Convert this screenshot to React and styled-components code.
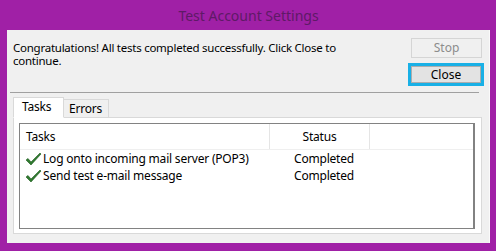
import styled, { createGlobalStyle } from "styled-components";

const GlobalStyle = createGlobalStyle`
  html, body {
    margin: 0;
    padding: 0;
    background: #a020a6;
  }
  body {
    font-family: "Noto Sans", "Open Sans", sans-serif;
    font-size: 12px;
    letter-spacing: -0.2px;
    color: #000;
  }
`;

const tasks = [
  { name: "Log onto incoming mail server (POP3)", status: "Completed" },
  { name: "Send test e-mail message", status: "Completed" },
];

function Check() {
  return (
    <svg width="17" height="14" viewBox="0 0 17 14">
      <path
        d="M1 8 L3 6.5 L6 10 L15 1 L16 2 L6 13 Z"
        fill="#2f7a2f"
        stroke="#1f5a1f"
        strokeWidth="0.6"
        strokeLinejoin="round"
      />
    </svg>
  );
}

export default function App() {
  return (
    <>
      <GlobalStyle />
      <Window>
        <TitleBar>Test Account Settings</TitleBar>
        <Content>
          <TopRow>
            <Message>
              <Line>
                Congratulations! All tests completed successfully. Click Close
                to
              </Line>
              <Line>continue.</Line>
            </Message>
            <Buttons>
              <Button disabled>Stop</Button>
              <FocusRing>
                <Button $focused>Close</Button>
              </FocusRing>
            </Buttons>
          </TopRow>
          <Separator />
          <TabStrip>
            <Tab $active>Tasks</Tab>
            <Tab>Errors</Tab>
          </TabStrip>
          <Panel>
            <List>
              <HeaderRow>
                <HeaderCell>Tasks</HeaderCell>
                <HeaderCell $center>Status</HeaderCell>
                <HeaderCell $last />
              </HeaderRow>
              {tasks.map((t) => (
                <Row key={t.name}>
                  <NameCell>
                    <Check />
                    {t.name}
                  </NameCell>
                  <StatusCell>{t.status}</StatusCell>
                </Row>
              ))}
            </List>
          </Panel>
        </Content>
      </Window>
    </>
  );
}

const Window = styled.div`
  width: 496px;
  height: 251px;
  display: flex;
  flex-direction: column;
  box-sizing: border-box;
  padding: 0 6px 8px 7px;
`;

const TitleBar = styled.div`
  height: 30px;
  display: flex;
  align-items: center;
  justify-content: center;
  font-size: 14px;
  letter-spacing: 0;
  color: #5e1a66;
`;

const Content = styled.div`
  flex: 1;
  background: #f0f0f0;
  border-right: 1px solid #fafafa;
  display: flex;
  flex-direction: column;
  padding: 0 6px 9px 6px;
`;

const TopRow = styled.div`
  display: flex;
  justify-content: space-between;
  height: 62px;
`;

const Message = styled.div`
  padding-top: 10px;
  font-size: 11.5px;
  letter-spacing: -0.25px;
`;

const Line = styled.div`
  height: 13px;
  line-height: 15px;
  white-space: nowrap;
`;

const Buttons = styled.div`
  display: flex;
  flex-direction: column;
  align-items: flex-end;
  padding-top: 8px;
  gap: 5px;
  margin-right: 1px;
`;

const Button = styled.button`
  width: ${(p) => (p.$focused ? "70px" : "71px")};
  height: ${(p) => (p.$focused ? "17px" : "20px")};
  box-sizing: border-box;
  border: 1px solid ${(p) => (p.disabled ? "#d5d5d5" : "#adadad")};
  background: ${(p) => (p.disabled ? "#f0f0f0" : "#e3e3e3")};
  color: ${(p) => (p.disabled ? "#8c8c8c" : "#000")};
  font-family: inherit;
  font-size: 12px;
  letter-spacing: 0;
  line-height: 1;
  padding: 0;
  margin: 0;
`;

const FocusRing = styled.div`
  border: 3px solid #19b0e6;
  display: flex;
  margin-right: -2px;
`;

const Separator = styled.div`
  height: 1px;
  background: #a0a0a0;
  margin: 0 4px 0 -3px;
`;

const TabStrip = styled.div`
  display: flex;
  align-items: flex-end;
  height: 25px;
  margin-bottom: -1px;
  position: relative;
  z-index: 1;
`;

const Tab = styled.div`
  box-sizing: border-box;
  height: ${(p) => (p.$active ? "21px" : "19px")};
  padding: 0 ${(p) => (p.$active ? "8px" : "5px")};
  width: ${(p) => (p.$active ? "51px" : "45px")};
  border: 1px solid #d9d9d9;
  border-bottom: ${(p) => (p.$active ? "1px solid #fff" : "1px solid #d9d9d9")};
  border-left: ${(p) => (p.$active ? "1px solid #d9d9d9" : "none")};
  background: ${(p) => (p.$active ? "#fff" : "#f0f0f0")};
  display: flex;
  align-items: center;
  font-size: 12px;
  padding-bottom: ${(p) => (p.$active ? "3px" : "0")};
`;

const Panel = styled.div`
  flex: 1;
  background: #fff;
  border: 1px solid #d9d9d9;
  padding: 5px 6px 4px 5px;
  margin-right: 1px;
  display: flex;
`;

const List = styled.div`
  flex: 1;
  border: 1px solid #828282;
  border-right-width: 2px;
  background: #fff;
`;

const HeaderRow = styled.div`
  display: grid;
  grid-template-columns: 250px 100px 1fr;
  height: 25px;
  border-bottom: 1px solid #efefef;
`;

const HeaderCell = styled.div`
  display: flex;
  align-items: center;
  justify-content: ${(p) => (p.$center ? "center" : "flex-start")};
  padding-left: ${(p) => (p.$center ? "0" : "6px")};
  border-right: ${(p) => (p.$last ? "none" : "1px solid #e5e5e5")};
`;

const Row = styled.div`
  display: grid;
  grid-template-columns: 274px 1fr;
  height: 17px;
  align-items: center;
`;

const NameCell = styled.div`
  display: flex;
  align-items: center;
  gap: 1px;
  padding-left: 5px;
  white-space: nowrap;
`;

const StatusCell = styled.div`
  white-space: nowrap;
`;
